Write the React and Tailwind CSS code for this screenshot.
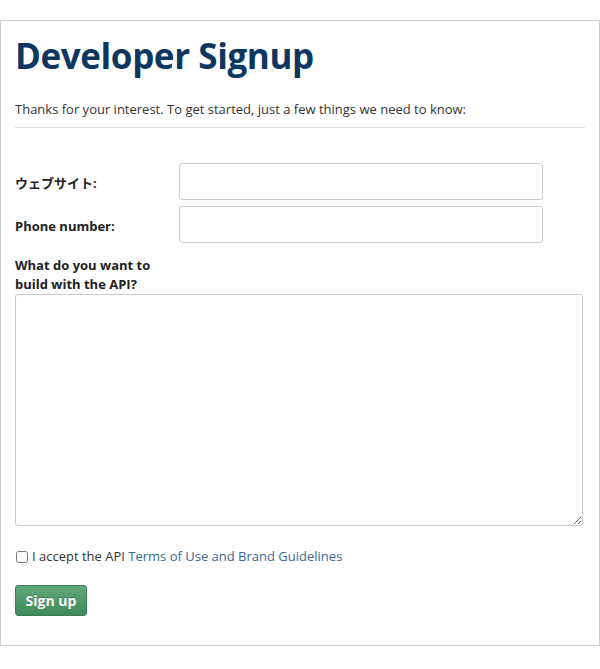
import React from 'react';

const font = { fontFamily: '"Open Sans", "Noto Sans CJK JP", sans-serif' };

export default function App() {
  return (
    <div className="bg-white min-h-[669px] pt-[20px]" style={font}>
      <div className="h-[626px] border border-[#cccccc] px-[14px]">
        {/* Header */}
        <h1 className="mt-[13px] h-[44px] text-[35px] leading-[44px] font-bold text-[#0d3760] tracking-[-0.4px]">
          Developer Signup
        </h1>
        <p className="mt-[21px] text-[13px] leading-[20px] text-[#333333]">
          Thanks for your interest. To get started, just a few things we need to know:
        </p>
        <hr className="mt-[8px] border-t border-[#dddddd]" />

        {/* Form */}
        <form className="mt-[35px]">
          <div className="flex items-center h-[37px]">
            <label className="w-[164px] pt-[4px] text-[13px] font-bold text-[#222222]">ウェブサイト:</label>
            <input type="text" className="w-[364px] h-[37px] border border-[#cccccc] rounded-[3px] bg-white" />
          </div>
          <div className="flex items-center h-[37px] mt-[6px]">
            <label className="w-[164px] pt-[4px] text-[13px] font-bold text-[#222222]">Phone number:</label>
            <input type="text" className="w-[364px] h-[37px] border border-[#cccccc] rounded-[3px] bg-white" />
          </div>
          <label className="block mt-[13px] w-[160px] text-[13px] leading-[19px] font-bold text-[#222222]">
            What do you want to build with the API?
          </label>
          <textarea className="block mt-0 w-[568px] h-[232px] border border-[#cccccc] rounded-[3px] bg-white" />

          <div className="flex items-center mt-[24px] h-[14px]">
            <input type="checkbox" className="w-[12px] h-[12px] m-0 ml-[1px]" />
            <span className="ml-[4px] text-[13px] text-[#333333]">
              I accept the API <a href="#" className="text-[#386b96]">Terms of Use and Brand Guidelines</a>
            </span>
          </div>

          <button
            type="button"
            className="mt-[21px] w-[72px] h-[31px] rounded-[3px] border border-[#3a7d52] bg-gradient-to-b from-[#62a77a] to-[#3f8b5a] text-white text-[14px] font-bold [text-shadow:0_-1px_0_rgba(0,0,0,0.25)]"
          >
            Sign up
          </button>
        </form>
      </div>
    </div>
  );
}
